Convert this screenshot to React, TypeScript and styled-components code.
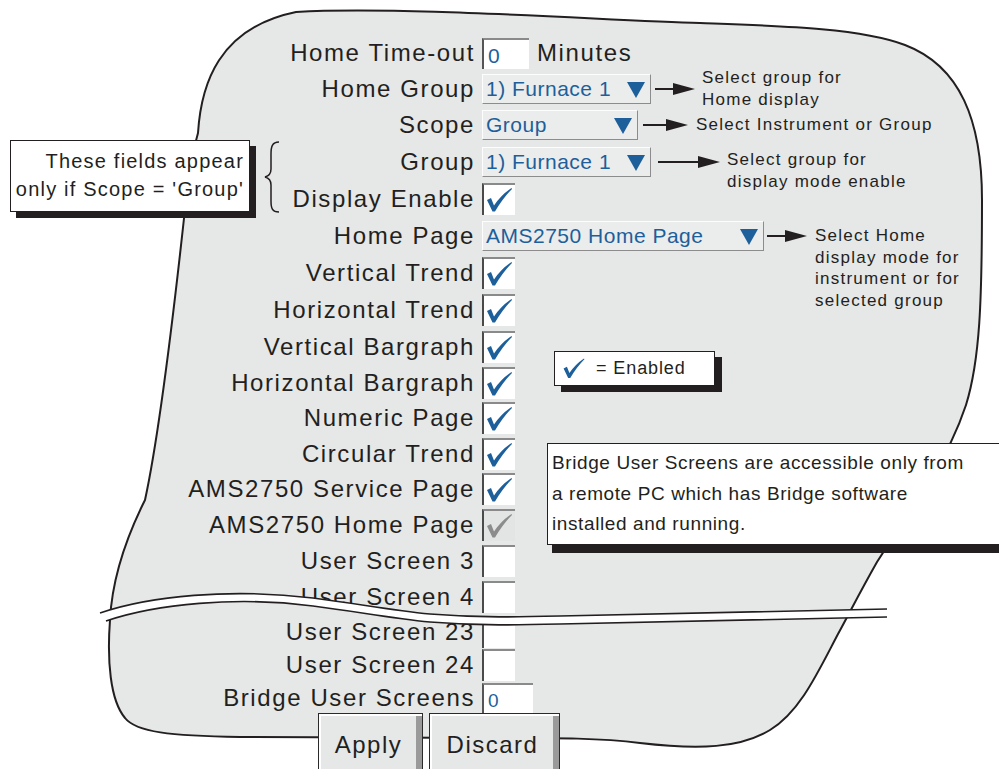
import React from 'react';
import styled, { createGlobalStyle } from 'styled-components';

const Blue = '#1d5f9b';
const Ink = '#231f20';

const GlobalStyle = createGlobalStyle`
  html, body { margin: 0; padding: 0; background: #fff; }
  body { font-family: "Liberation Sans", Arial, sans-serif; color: ${Ink}; }
`;

const Page = styled.div`
  position: relative;
  width: 999px;
  height: 769px;
  overflow: hidden;
  background: #fff;
`;

const Backdrop = styled.svg`
  position: absolute;
  left: 0;
  top: 0;
  width: 999px;
  height: 769px;
`;

const BreakBand = styled.svg`
  position: absolute;
  left: 0;
  top: 0;
  width: 999px;
  height: 769px;
  z-index: 2;
  pointer-events: none;
`;

const Form = styled.div`
  position: relative;
  display: flex;
  flex-direction: column;
  padding-top: 35px;
  z-index: 1;
`;

const Row = styled.div<{ $h: number }>`
  display: grid;
  grid-template-columns: 475px 1fr;
  grid-template-rows: ${p => p.$h}px;
  column-gap: 7px;
  align-items: stretch;
`;

const Label = styled.div`
  align-self: center;
  text-align: right;
  font-size: 24px;
  letter-spacing: 1.6px;
  white-space: nowrap;
  line-height: 1;
`;

const Cell = styled.div`
  display: flex;
  align-items: center;
  min-height: 0;
`;

const Field = styled.div<{ $w: number; $size: number }>`
  width: ${p => p.$w}px;
  height: 31px;
  box-sizing: border-box;
  background: #fff;
  border-left: 2px solid #555;
  border-top: 2px solid #8a8a8a;
  color: ${Blue};
  font-size: ${p => p.$size}px;
  padding: 3px 0 0 4px;
  display: flex;
  align-items: center;
`;

const Unit = styled.span`
  margin-left: 8px;
  font-size: 24px;
  letter-spacing: 1.6px;
`;

const Select = styled.div<{ $w: number }>`
  width: ${p => p.$w}px;
  height: 30px;
  box-sizing: border-box;
  background: #ebecec;
  border: 1px solid;
  border-color: #fdfdfd #8c8c8c #8c8c8c #fdfdfd;
  display: flex;
  align-items: center;
  justify-content: space-between;
  padding: 0 5px 0 3px;
  color: ${Blue};
  font-size: 21px;
  letter-spacing: 0.5px;
  white-space: nowrap;
`;

const Tri = styled.span`
  width: 0;
  height: 0;
  border-left: 9px solid transparent;
  border-right: 9px solid transparent;
  border-top: 16px solid ${Blue};
  margin-top: 2px;
`;

const ArrowSvg = styled.svg<{ $ml: number }>`
  flex: none;
  margin-left: ${p => p.$ml}px;
`;

const Note = styled.div<{ $ml: number; $top?: number }>`
  margin-left: ${p => p.$ml}px;
  align-self: ${p => (p.$top === undefined ? 'center' : 'flex-start')};
  margin-top: ${p => p.$top ?? 0}px;
  font-size: 17px;
  letter-spacing: 1.25px;
  line-height: 21.5px;
  white-space: nowrap;
`;

const Box = styled.div<{ $off?: boolean }>`
  width: 33px;
  height: 32px;
  box-sizing: border-box;
  background: ${p => (p.$off ? '#e3e4e4' : '#fff')};
  border-left: 2px solid #4a4a4a;
  border-top: 2px solid #8a8a8a;
  display: flex;
`;

const Buttons = styled.div`
  display: flex;
  gap: 6px;
  padding-left: 318px;
  margin-top: -2px;
`;

const Button = styled.div<{ $w: number }>`
  width: ${p => p.$w}px;
  height: 62px;
  box-sizing: border-box;
  background: #e6e8e8;
  border: 1.5px solid #2a2a2a;
  box-shadow: inset 2px 2px 0 #fff, inset -6px 0 0 #9a9a9a;
  display: flex;
  justify-content: center;
  padding: 17px 4px 0 0;
  font-size: 24px;
  letter-spacing: 1.5px;
`;

const Callout = styled.div`
  position: absolute;
  left: 10px;
  top: 140px;
  display: flex;
  gap: 12px;
  z-index: 3;
`;

const Panel = styled.div<{ $w: number; $h: number }>`
  width: ${p => p.$w}px;
  height: ${p => p.$h}px;
  box-sizing: border-box;
  background: #fff;
  border: 1.5px solid ${Ink};
  box-shadow: 6px 6px 0 ${Ink};
`;

const CalloutText = styled(Panel)`
  padding: 6px 5px 0 0;
  text-align: right;
  font-size: 20px;
  letter-spacing: 1.2px;
  line-height: 28px;
`;

const Legend = styled(Panel)`
  position: absolute;
  left: 554px;
  top: 351px;
  display: flex;
  align-items: center;
  gap: 9px;
  padding-left: 6px;
  font-size: 18px;
  letter-spacing: 0.9px;
  box-shadow: 7px 6px 0 ${Ink};
  z-index: 3;
`;

const BridgeNote = styled(Panel)`
  position: absolute;
  left: 547px;
  top: 443px;
  padding: 4px 0 0 4px;
  font-size: 19px;
  letter-spacing: 0.6px;
  line-height: 30.5px;
  box-shadow: 5px 8px 0 ${Ink};
  z-index: 3;
`;

const Tick = ({ off, w = 31, h = 30 }: { off?: boolean; w?: number; h?: number }) => (
  <svg width={w} height={h} viewBox="0 0 31 30">
    <path
      d="M3 15 L7 13 L10 20.5 Q17 10 27.5 3 L28 4 Q19 13 11 26.5 L8.5 26.5 Z"
      fill={off ? '#8c8c8c' : Blue}
    />
  </svg>
);

const Arrow = ({ w, ml }: { w: number; ml: number }) => (
  <ArrowSvg $ml={ml} width={w} height={14} viewBox={`0 0 ${w} 14`}>
    <line x1={0} y1={7} x2={w - 18} y2={7} stroke={Ink} strokeWidth={2} />
    <polygon points={`${w - 22},1 ${w},7 ${w - 22},13`} fill={Ink} />
  </ArrowSvg>
);

const blobPath =
  'M 198 133 C 201 85, 218 28, 296 12 C 400 6, 600 20, 700 23 C 780 26, 860 28, 905 45 ' +
  'C 960 66, 982 120, 982 200 C 982 300, 980 360, 966 405 C 956 435, 945 456, 930 480 ' +
  'L 877 562 C 860 592, 850 612, 838 634 C 818 672, 800 712, 770 730 ' +
  'C 740 748, 700 750, 640 743 C 600 738, 560 738, 500 738 L 240 737 ' +
  'C 170 736, 136 732, 125 718 C 110 700, 107 660, 110 620 C 112 580, 125 540, 145 500 ' +
  'C 158 440, 172 330, 186 200 C 189 170, 193 150, 198 133 Z';

const bandTop = 'M 100 613 C 150 596, 230 588, 313 598 C 360 604, 390 610, 430 614 C 480 618, 520 617, 560 616 L 887 609';
const bandBottom = 'M 106 621 C 156 604, 236 596, 313 606 C 360 612, 390 618, 430 622 C 480 626, 520 625, 560 624 L 887 617';
const bandFill =
  'M 100 613 C 150 596, 230 588, 313 598 C 360 604, 390 610, 430 614 C 480 618, 520 617, 560 616 L 887 609 ' +
  'L 887 617 L 560 624 C 520 625, 480 626, 430 622 C 390 618, 360 612, 313 606 C 236 596, 156 604, 106 621 Z';

type RowDef = { label: string; h: number; kind: 'check' | 'off' | 'empty' };

const checkRows: RowDef[] = [
  { label: 'Vertical Trend', h: 37, kind: 'check' },
  { label: 'Horizontal Trend', h: 37, kind: 'check' },
  { label: 'Vertical Bargraph', h: 38, kind: 'check' },
  { label: 'Horizontal Bargraph', h: 34, kind: 'check' },
  { label: 'Numeric Page', h: 36, kind: 'check' },
  { label: 'Circular Trend', h: 35, kind: 'check' },
  { label: 'AMS2750 Service Page', h: 36, kind: 'check' },
  { label: 'AMS2750 Home Page', h: 36, kind: 'off' },
  { label: 'User Screen 3', h: 36, kind: 'empty' },
  { label: 'User Screen 4', h: 36, kind: 'empty' },
  { label: 'User Screen 23', h: 33, kind: 'empty' },
  { label: 'User Screen 24', h: 33, kind: 'empty' },
];

export default function App() {
  return (
    <Page>
      <GlobalStyle />
      <Backdrop viewBox="0 0 999 769">
        <path d={blobPath} fill="#e6e7e7" stroke={Ink} strokeWidth={2} />
      </Backdrop>

      <Form>
        <Row $h={36}>
          <Label>Home Time-out</Label>
          <Cell>
            <Field $w={47} $size={21}>0</Field>
            <Unit>Minutes</Unit>
          </Cell>
        </Row>
        <Row $h={36}>
          <Label>Home Group</Label>
          <Cell>
            <Select $w={169}>1) Furnace 1<Tri /></Select>
            <Arrow w={40} ml={4} />
            <Note $ml={7} $top={-4}>Select group for<br />Home display</Note>
          </Cell>
        </Row>
        <Row $h={36}>
          <Label>Scope</Label>
          <Cell>
            <Select $w={156}>Group<Tri /></Select>
            <Arrow w={45} ml={5} />
            <Note $ml={8}>Select Instrument or Group</Note>
          </Cell>
        </Row>
        <Row $h={37}>
          <Label>Group</Label>
          <Cell>
            <Select $w={169}>1) Furnace 1<Tri /></Select>
            <Arrow w={62} ml={7} />
            <Note $ml={7} $top={6}>Select group for<br />display mode enable</Note>
          </Cell>
        </Row>
        <Row $h={37}>
          <Label>Display Enable</Label>
          <Cell><Box><Tick /></Box></Cell>
        </Row>
        <Row $h={37}>
          <Label>Home Page</Label>
          <Cell>
            <Select $w={282}>AMS2750 Home Page<Tri /></Select>
            <Arrow w={40} ml={3} />
            <Note $ml={8} $top={8}>
              Select Home<br />display mode for<br />instrument or for<br />selected group
            </Note>
          </Cell>
        </Row>
        {checkRows.map(r => (
          <Row key={r.label} $h={r.h}>
            <Label>{r.label}</Label>
            <Cell>
              <Box $off={r.kind === 'off'}>
                {r.kind !== 'empty' && <Tick off={r.kind === 'off'} />}
              </Box>
            </Cell>
          </Row>
        ))}
        <Row $h={34}>
          <Label>Bridge User Screens</Label>
          <Cell>
            <Field $w={51} $size={19}>0</Field>
          </Cell>
        </Row>
        <Buttons>
          <Button $w={105}>Apply</Button>
          <Button $w={131}>Discard</Button>
        </Buttons>
      </Form>

      <BreakBand viewBox="0 0 999 769">
        <path d={bandFill} fill="#fff" />
        <path d={bandTop} fill="none" stroke={Ink} strokeWidth={1.6} />
        <path d={bandBottom} fill="none" stroke={Ink} strokeWidth={1.6} />
      </BreakBand>

      <Callout>
        <CalloutText $w={240} $h={72}>
          These fields appear<br />only if Scope = 'Group'
        </CalloutText>
        <svg width={20} height={74} viewBox="0 0 20 74">
          <path
            d="M 17 2 C 10 2, 9 7, 9 14 L 9 29 C 9 34, 7 36, 3 37 C 7 38, 9 40, 9 45 L 9 61 C 9 68, 10 72, 17 72"
            fill="none"
            stroke={Ink}
            strokeWidth={1.5}
          />
        </svg>
      </Callout>

      <Legend $w={161} $h={35}>
        <Tick w={26} h={25} />
        <span>= Enabled</span>
      </Legend>

      <BridgeNote $w={470} $h={102}>
        Bridge User Screens are accessible only from<br />
        a remote PC which has Bridge software<br />
        installed and running.
      </BridgeNote>
    </Page>
  );
}
